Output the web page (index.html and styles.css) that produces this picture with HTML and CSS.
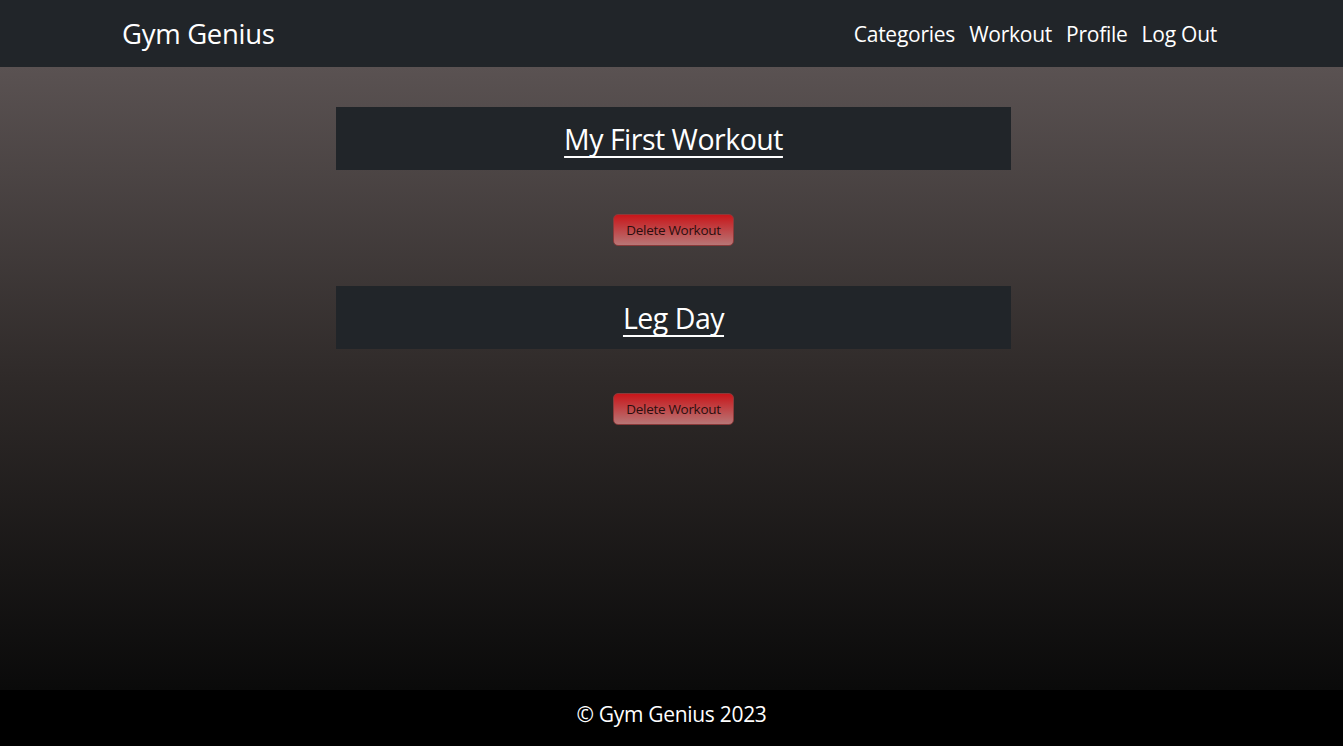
FILE: index.html
```html
<!DOCTYPE html>
<html lang="en">
<head>
<meta charset="utf-8">
<title>Gym Genius</title>
<link rel="stylesheet" href="styles.css">
</head>
<body>
<header class="navbar">
  <div class="nav-inner">
    <a class="brand" href="#">Gym Genius</a>
    <nav class="nav-links">
      <a href="#">Categories</a>
      <a href="#">Workout</a>
      <a href="#">Profile</a>
      <a href="#">Log Out</a>
    </nav>
  </div>
</header>
<main class="content">
  <section class="workout">
    <div class="workout-title"><a href="#">My First Workout</a></div>
    <button class="delete-btn">Delete Workout</button>
  </section>
  <section class="workout">
    <div class="workout-title"><a href="#">Leg Day</a></div>
    <button class="delete-btn">Delete Workout</button>
  </section>
</main>
<footer class="footer">© Gym Genius 2023</footer>
</body>
</html>
```
FILE: styles.css
```css
* { box-sizing: border-box; }
html, body { height: 100%; }
body {
  margin: 0;
  font-family: "Open Sans", "Noto Sans", sans-serif;
  color: #fff;
  display: flex;
  flex-direction: column;
  min-height: 100vh;
  background: #000;
}
a { color: #fff; text-decoration: none; }
.navbar {
  background: #212529;
  height: 67px;
  flex: 0 0 auto;
}
.nav-inner {
  height: 100%;
  padding: 0 126px 0 122px;
  display: flex;
  align-items: center;
  justify-content: space-between;
}
.brand {
  font-size: 27.5px;
  letter-spacing: -0.3px;
}
.nav-links {
  display: flex;
  gap: 14px;
  font-size: 21px;
  letter-spacing: -0.25px;
}
.content {
  flex: 1 1 auto;
  background: linear-gradient(to bottom, #5a5252 0%, #2f2a29 50%, #0a0a0a 100%);
  display: flex;
  flex-direction: column;
  align-items: center;
  padding-top: 40px;
}
.workout {
  display: flex;
  flex-direction: column;
  align-items: center;
  margin-bottom: 40px;
}
.workout-title {
  width: 675px;
  height: 63px;
  background: #212529;
  display: flex;
  align-items: center;
  justify-content: center;
  margin-left: 4px;
}
.workout-title a {
  font-size: 28.5px;
  letter-spacing: -0.5px;
  text-decoration: underline;
  text-decoration-thickness: 2px;
  text-underline-offset: 6px;
  text-decoration-skip-ink: none;
}
.delete-btn {
  margin-top: 44px;
  width: 121px;
  height: 32px;
  border: 1px solid #8a3a3a;
  border-radius: 5px;
  background: linear-gradient(to bottom, #c8161a, #b87676);
  color: #2a0e0e;
  font-family: "Open Sans", "Noto Sans", sans-serif;
  font-size: 13.5px;
  letter-spacing: -0.3px;
  padding: 0;
  margin-left: 4px;
}
.footer {
  height: 56px;
  flex: 0 0 auto;
  background: #000;
  display: flex;
  align-items: center;
  justify-content: center;
  padding-bottom: 8px;
  font-size: 21px;
  letter-spacing: -0.3px;
}
```
